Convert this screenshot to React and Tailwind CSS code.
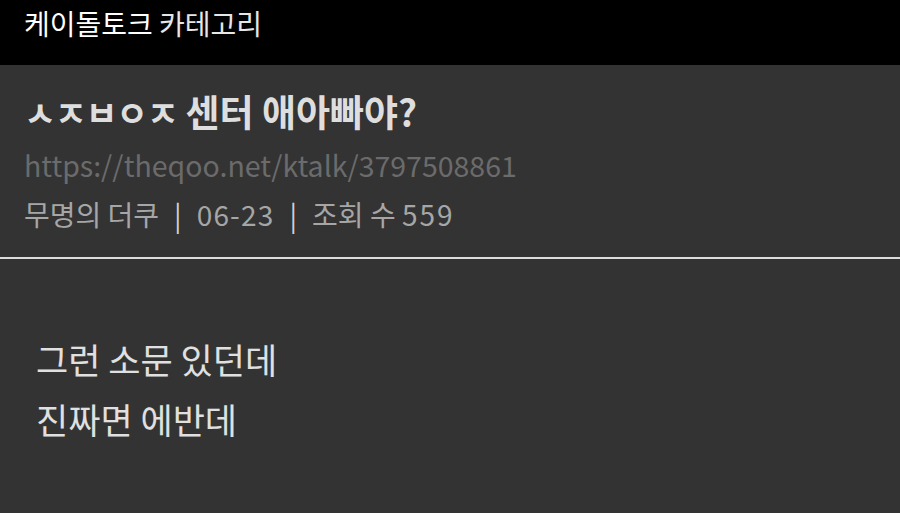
export default function App() {
    const font = {
        fontFamily: '"Noto Sans CJK KR", "Noto Sans", sans-serif',
    };

    return (
        <div className="min-h-[513px] w-full bg-[#333333]" style={font}>
            <div className="flex h-[65px] items-start bg-black px-[24px] pt-[3px]">
                <h1 className="text-[28px] leading-[40px] text-white">
                    케이돌토크 <span className="text-[#e6e6e6]">카테고리</span>
                </h1>
            </div>

            <div className="border-b-2 border-[#dddddd] px-[24px] pt-[24px] pb-[23px]">
                <h2 className="text-[35px] font-bold leading-[44px] text-[#dedede]">
                    <span className="tracking-[-1.5px]">ㅅㅈㅂㅇㅈ</span>{' '}
                    <span className="text-[37px]">센터 애아빠야?</span>
                </h2>
                <div className="mt-[11px] text-[28.5px] leading-[40px] text-[#6b6b6b]">
                    https://theqoo.net/ktalk/3797508861
                </div>
                <div className="mt-[9px] flex items-center text-[28px] leading-[40px] text-[#a6a6a6]">
                    <span>무명의 더쿠</span>
                    <span className="mx-[15px] text-[#d0d0d0]">|</span>
                    <span className="tracking-[1.2px]">06-23</span>
                    <span className="mx-[15px] text-[#d0d0d0]">|</span>
                    <span>
                        조회 수 <span className="tracking-[2px]">559</span>
                    </span>
                </div>
            </div>

            <div className="px-[36px] pt-[70px] text-[35px] leading-[60px] text-[#e0e0e0]">
                <p>그런 소문 있던데</p>
                <p>진짜면 에반데</p>
            </div>
        </div>
    );
}
